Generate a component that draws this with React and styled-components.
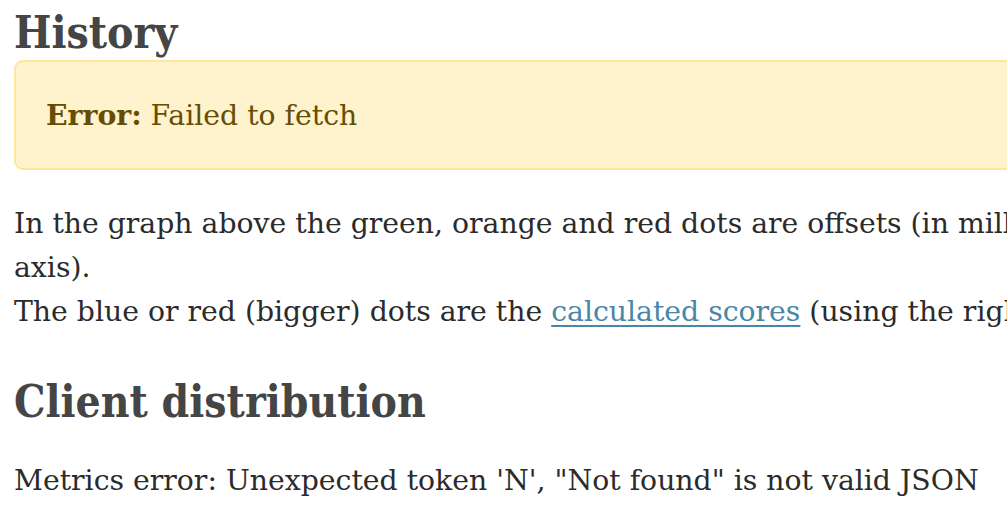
import React from 'react';
import styled, { createGlobalStyle } from 'styled-components';

const GlobalStyle = createGlobalStyle`
  html, body {
    margin: 0;
    padding: 0;
    background: #fff;
    overflow-x: hidden;
  }
`;

const Page = styled.main`
  width: 1850px;
  padding: 5px 14px 0;
  font-family: "DejaVu Serif", "Liberation Serif", serif;
  font-size: 28.3px;
  line-height: 44px;
  color: #2b2b2b;
`;

const Heading = styled.h2`
  margin: ${(p) => p.$top || 0}px 0 0;
  font-family: "DejaVu Serif Condensed", "DejaVu Serif", serif;
  font-size: 44px;
  line-height: 55px;
  font-weight: 700;
  color: #454545;
`;

const Alert = styled.div`
  box-sizing: border-box;
  height: 110px;
  padding: 31px 30px;
  border: 2px solid #ffe69c;
  border-radius: 9px;
  background: #fff3cd;
  color: #664d03;

  strong {
    font-weight: 700;
  }
`;

const Text = styled.p`
  margin: ${(p) => p.$top || 0}px 0 0;
`;

const Link = styled.a`
  color: #4a86a8;
  text-decoration: underline;
  text-decoration-thickness: 2px;
  text-underline-offset: 4px;
`;

export default function App() {
  return (
    <>
      <GlobalStyle />
      <Page>
        <Heading>History</Heading>
        <Alert>
          <strong>Error:</strong> Failed to fetch
        </Alert>
        <Text $top={32}>
          In the graph above the green, orange and red dots are offsets (in milliseconds) as measured by the monitoring system (left
          axis).
          <br />
          The blue or red (bigger) dots are the <Link href="#">calculated scores</Link> (using the right axis).
        </Text>
        <Heading $top={40}>Client distribution</Heading>
        <Text $top={30}>Metrics error: Unexpected token 'N', "Not found" is not valid JSON</Text>
      </Page>
    </>
  );
}
